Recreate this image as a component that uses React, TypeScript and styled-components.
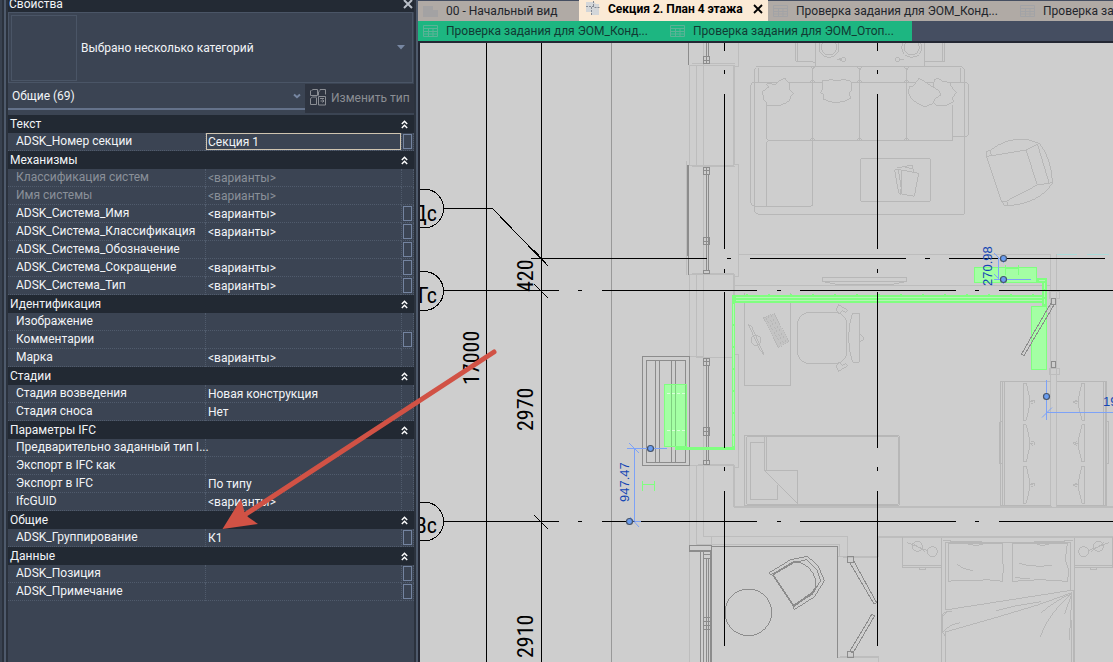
import React from 'react';
import styled, { createGlobalStyle } from 'styled-components';

const GlobalStyle = createGlobalStyle`
  *, *::before, *::after { box-sizing: border-box; }
  html, body { margin: 0; height: 100%; }
  body {
    font-family: Roboto, "Open Sans", sans-serif;
    font-size: 12px;
    color: #f2f4f7;
    background: #2b323d;
    overflow: hidden;
  }
  button, input, select { font: inherit; color: inherit; margin: 0; padding: 0; }
`;

/* ---------- window frame ---------- */

const Workspace = styled.main`
  position: relative;
  display: flex;
  height: 100vh;
`;

const DockEdge = styled.div`
  flex: 0 0 8px;
  background: #2b323d;
  border-left: 2px solid #394250;
  display: flex;
  padding-left: 2px;
`;

const Splitter = styled.div`
  flex: 0 0 2px;
  background: #4e5a6c;
`;

const Gutter = styled.div`
  flex: 0 0 2px;
  background: #2b323d;
`;

/* ---------- properties palette ---------- */

const Palette = styled.section`
  flex: 0 0 406px;
  display: flex;
  flex-direction: column;
  background: #3b4453;
`;

const PaletteTitle = styled.header`
  display: flex;
  align-items: flex-end;
  justify-content: space-between;
  height: 12px;
  background: #232a34;
  padding-right: 1px;
`;

const PaletteName = styled.h2`
  margin: 0;
  padding-left: 1px;
  font-size: 12px;
  font-weight: 400;
  line-height: 16px;
`;

const IconButton = styled.button`
  display: flex;
  align-items: center;
  justify-content: center;
  border: 0;
  background: none;
`;

const TypeSelector = styled.div`
  position: relative;
  display: flex;
  align-items: center;
  gap: 4px;
  height: 71px;
  padding: 1px 2px;
  border: 1px solid #4a5566;
  margin-right: 1px;
`;

const Preview = styled.div`
  width: 66px;
  height: 66px;
  border: 1px solid #4a5566;
`;

const Picker = styled.select`
  flex: 1;
  height: 100%;
  appearance: none;
  border: 0;
  outline: 0;
  background: none;
`;

const Caret = styled.svg`
  position: absolute;
  right: 7px;
  top: 50%;
  margin-top: -3px;
  pointer-events: none;
`;

const FilterRow = styled.div`
  display: flex;
  height: 32px;
  padding-top: 1px;
`;

const FilterBox = styled.div`
  position: relative;
  flex: 1;
  display: flex;
  height: 26px;
  padding-left: 4px;
  border-bottom: 2px solid #64728a;
  & > svg { right: 4px; }
`;

const EditType = styled.button`
  display: flex;
  align-items: center;
  gap: 4px;
  width: 109px;
  height: 29px;
  padding: 0 0 2px 5px;
  border: 0;
  background: #2e3440;
  color: #8b8e94;
  white-space: nowrap;
`;

const Grid = styled.table`
  width: 100%;
  table-layout: fixed;
  border-collapse: separate;
  border-spacing: 0;
`;

const GroupHead = styled.th`
  height: 18px;
  padding: 0 6px 0 2px;
  background: #222933;
  font-weight: 400;
  text-align: left;
`;

const GroupBar = styled.div`
  display: flex;
  justify-content: space-between;
  align-items: center;
  height: 18px;
  line-height: 18px;
`;

const Name = styled.th<{ $dim?: boolean }>`
  height: 18px;
  padding: 0 0 0 8px;
  border-bottom: 1px dotted #505b6c;
  font-weight: 400;
  line-height: 17px;
  text-align: left;
  white-space: nowrap;
  color: ${p => (p.$dim ? '#8a9099' : '#f2f4f7')};
`;

const Value = styled.td<{ $dim?: boolean }>`
  height: 18px;
  padding: 0;
  border-left: 1px dotted #505b6c;
  border-bottom: 1px dotted #505b6c;
  color: ${p => (p.$dim ? '#8a9099' : '#f2f4f7')};
`;

const Field = styled.input<{ $active?: boolean }>`
  display: block;
  width: 100%;
  height: 17px;
  padding: ${p => (p.$active ? '0 1px' : '0 2px')};
  border: ${p => (p.$active ? '1px solid #cfc4b0' : '0')};
  background: none;
  outline: 0;
`;

const Link = styled.td`
  height: 18px;
  padding: 0 1px;
  border-left: 1px dotted #505b6c;
  border-right: 1px dotted #505b6c;
  border-bottom: 1px dotted #505b6c;
`;

const LinkButton = styled.button`
  display: block;
  width: 9px;
  height: 15px;
  border: 1px solid #7484a0;
  background: none;
`;

type Row = { name: string; value?: string; dim?: boolean; link?: boolean; active?: boolean };
type Group = { title: string; rows: Row[] };

const V = '<варианты>';

const groups: Group[] = [
  { title: 'Текст', rows: [{ name: 'ADSK_Номер секции', value: 'Секция 1', link: true, active: true }] },
  {
    title: 'Механизмы',
    rows: [
      { name: 'Классификация систем', value: V, dim: true },
      { name: 'Имя системы', value: V, dim: true },
      { name: 'ADSK_Система_Имя', value: V, link: true },
      { name: 'ADSK_Система_Классификация', value: V, link: true },
      { name: 'ADSK_Система_Обозначение', link: true },
      { name: 'ADSK_Система_Сокращение', value: V, link: true },
      { name: 'ADSK_Система_Тип', value: V, link: true },
    ],
  },
  {
    title: 'Идентификация',
    rows: [{ name: 'Изображение' }, { name: 'Комментарии', link: true }, { name: 'Марка', value: V }],
  },
  {
    title: 'Стадии',
    rows: [{ name: 'Стадия возведения', value: 'Новая конструкция' }, { name: 'Стадия сноса', value: 'Нет' }],
  },
  {
    title: 'Параметры IFC',
    rows: [
      { name: 'Предварительно заданный тип I...' },
      { name: 'Экспорт в IFC как' },
      { name: 'Экспорт в IFC', value: 'По типу' },
      { name: 'IfcGUID', value: V },
    ],
  },
  { title: 'Общие', rows: [{ name: 'ADSK_Группирование', value: 'К1', link: true }] },
  { title: 'Данные', rows: [{ name: 'ADSK_Позиция', link: true }, { name: 'ADSK_Примечание', link: true }] },
];

const CollapseIcon = () => (
  <svg width="7" height="9" viewBox="0 0 7 9" fill="none" stroke="#fff" strokeWidth="1.4">
    <path d="M.8 4 3.5 1.2 6.2 4M.8 8 3.5 5.2 6.2 8" />
  </svg>
);

const EditTypeIcon = () => (
  <svg width="17" height="17" viewBox="0 0 17 17" fill="none" stroke="#8b8e94">
    <path d="M1.5 1.5 3 .5h4.500v6H.5v-5M9 1.500 10 .5h5.500v5M8.500 6.500V3L10 1.500M.5 15.500v-6l2-1.500h4.500M.5 15.500h6V9M8.500 7.500h7v8.500h-7zM10 9.500h4M10.500 12h3.500M12.500 10.500 14 12l-1.500 1.500" />
  </svg>
);

function PropertiesPalette() {
  return (
    <Palette aria-label="Свойства">
      <PaletteTitle>
        <PaletteName>Свойства</PaletteName>
        <IconButton aria-label="Закрыть">
          <svg width="10" height="12" viewBox="0 0 10 12" fill="none" stroke="#b9bfc8" strokeWidth="2">
            <path d="M1 0 9 8M9 0 1 8" />
          </svg>
        </IconButton>
      </PaletteTitle>
      <TypeSelector>
        <Preview />
        <Picker aria-label="Тип">
          <option>Выбрано несколько категорий</option>
        </Picker>
        <Caret width="8" height="5" viewBox="0 0 8 5">
          <path d="M0 0h8L4 4.500z" fill="#7787a2" />
        </Caret>
      </TypeSelector>
      <FilterRow>
        <FilterBox>
          <Picker aria-label="Фильтр">
            <option>Общие (69)</option>
          </Picker>
          <Caret width="8" height="6" viewBox="0 0 8 6">
            <path d="M1 1.500 4 4.200 7 1.500" fill="none" stroke="#7787a2" strokeWidth="2" />
          </Caret>
        </FilterBox>
        <EditType>
          <EditTypeIcon />
          Изменить тип
        </EditType>
      </FilterRow>
      <Grid>
        <colgroup>
          <col />
          <col width="196" />
          <col width="13" />
        </colgroup>
        {groups.map(g => (
          <tbody key={g.title}>
            <tr>
              <GroupHead colSpan={3}>
                <GroupBar>
                  {g.title}
                  <IconButton aria-label={'Свернуть: ' + g.title}>
                    <CollapseIcon />
                  </IconButton>
                </GroupBar>
              </GroupHead>
            </tr>
            {g.rows.map(r => (
              <tr key={r.name}>
                <Name scope="row" $dim={r.dim}>{r.name}</Name>
                <Value $dim={r.dim}>
                  <Field aria-label={r.name} defaultValue={r.value ?? ''} $active={r.active} readOnly={r.dim} />
                </Value>
                <Link>{r.link && <LinkButton aria-label={'Связать: ' + r.name} />}</Link>
              </tr>
            ))}
          </tbody>
        ))}
      </Grid>
    </Palette>
  );
}

/* ---------- document tabs ---------- */

const Documents = styled.section`
  flex: 1;
  min-width: 0;
  display: flex;
  flex-direction: column;
  background: #454e61;
`;

const TabRow = styled.nav<{ $first?: boolean }>`
  display: flex;
  align-items: flex-end;
  height: ${p => (p.$first ? '21px' : '20px')};
  overflow: hidden;
`;

const tones = {
  idle: { bg: '#b0aaa5', fg: '#22252b' },
  active: { bg: '#fbead5', fg: '#000000' },
  green: { bg: '#1db681', fg: '#113a33' },
};

const Tab = styled.div<{ $tone: keyof typeof tones; $width: number }>`
  flex: 0 0 ${p => p.$width}px;
  display: flex;
  align-items: center;
  height: ${p => (p.$tone === 'active' ? '21px' : '20px')};
  padding: ${p => (p.$tone === 'active' ? '0 5px 4px 6px' : '0 5px')};
  background: ${p => tones[p.$tone].bg};
  color: ${p => tones[p.$tone].fg};
  font-weight: ${p => (p.$tone === 'active' ? 700 : 400)};
  & > svg { flex: none; }
`;

const TabLabel = styled.button`
  flex: 1;
  padding: 0 0 0 8px;
  border: 0;
  background: none;
  line-height: 18px;
  text-align: left;
  white-space: nowrap;
`;

const SheetIcon = ({ color }: { color: string }) => (
  <svg width="15" height="12" viewBox="0 0 15 12" fill="none" stroke={color}>
    <path d="M.5.5h14v11H.5zM.5 3.500h14M.5 6.500h14M.5 9h14M5.500 3v9M10 3v9" />
  </svg>
);

const HomeIcon = () => (
  <svg width="15" height="12" viewBox="0 0 15 12">
    <path d="M0 1h10v4h5v7H0z" fill="#a3a2a3" />
  </svg>
);

const PlanIcon = () => (
  <svg width="15" height="15" viewBox="0 0 15 15">
    <path d="M2 1h7l2 2h3v11H6v-3H1V1z" fill="#d3d6d9" />
    <path d="M8.500 0v5M6.500 6v8M1 5.500h8M9.500 6.500h5" stroke="#858b94" strokeDasharray="2 1" fill="none" />
  </svg>
);

function DocumentTabs() {
  return (
    <>
      <TabRow $first>
        <Tab $tone="idle" $width={161}>
          <HomeIcon />
          <TabLabel>00 - Начальный вид</TabLabel>
        </Tab>
        <Tab $tone="active" $width={189}>
          <PlanIcon />
          <TabLabel>Секция 2. План 4 этажа</TabLabel>
          <IconButton aria-label="Закрыть вид">
            <svg width="10" height="10" viewBox="0 0 10 10" stroke="#000" strokeWidth="1.800">
              <path d="M1 1 9 9M9 1 1 9" />
            </svg>
          </IconButton>
        </Tab>
        <Tab $tone="idle" $width={247}>
          <SheetIcon color="#a2a3a6" />
          <TabLabel>Проверка задания для ЭОМ_Конд...</TabLabel>
        </Tab>
        <Tab $tone="idle" $width={247}>
          <SheetIcon color="#a2a3a6" />
          <TabLabel>Проверка за</TabLabel>
        </Tab>
      </TabRow>
      <TabRow>
        <Tab $tone="green" $width={247}>
          <SheetIcon color="#5ab396" />
          <TabLabel>Проверка задания для ЭОМ_Конд...</TabLabel>
        </Tab>
        <Tab $tone="green" $width={247}>
          <SheetIcon color="#5ab396" />
          <TabLabel>Проверка задания для ЭОМ_Отоп...</TabLabel>
        </Tab>
      </TabRow>
    </>
  );
}

/* ---------- floor plan ---------- */

const Viewport = styled.div`
  flex: 1;
  min-height: 0;
  border: solid #232733;
  border-width: 2px 0 0 2px;
  background: #cecece;
`;

const Drawing = styled.svg`
  display: block;
  width: 100%;
  height: 100%;
`;

const GridLabel = styled.text`
  font-family: "Roboto Condensed", "Open Sans Condensed", "Noto Sans Mono CJK JP", "Liberation Sans", sans-serif;
  font-size: 22px;
  fill: #000;
`;

const DimLabel = styled.text`
  font-family: "Liberation Sans", sans-serif;
  font-size: 13px;
  fill: #1346b4;
`;

const Turned = ({ x, y, children, as: T = GridLabel }: { x: number; y: number; children: string; as?: any }) => (
  <T transform={`translate(${x} ${y}) rotate(-90)`}>{children}</T>
);

const axesY = [724.5, 877.5];
const verticalDashes = [[43, 51], [70, 74], [94, 249], [269, 273], [292, 448], [467, 471], [491, 646]];
const longDashes = [[444, 559], [578, 582], [602, 757], [777, 781], [800, 956], [975, 979], [999, 1400]];
const upperDashes = [[531, 707], [727, 731], [750, 906], [925, 930], [949, 1105]];

const Axes = () => (
  <g stroke="#000" fill="none" shapeRendering="crispEdges">
    <path d="M486.5 43V2000M541.5 43V2000" />
    {axesY.map(x => (
      <path key={x} d={verticalDashes.map(([a, b]) => `M${x} ${a}V${b}`).join('')} />
    ))}
    {[290.5, 521.5].map(y => (
      <path key={y} d={longDashes.map(([a, b]) => `M${a} ${y}H${b}`).join('')} />
    ))}
    <path d={upperDashes.map(([a, b]) => `M${a} 258.5H${b}`).join('')} />
    <path d="M444 208.5H492.5L548 266M534 250 548 266M534 284 548 298M534 515 548 529" />
    <circle cx="424" cy="208.500" r="19.500" />
    <circle cx="424" cy="291" r="19.500" />
    <circle cx="424" cy="521.500" r="19.500" />
  </g>
);

const Walls = () => (
  <g fill="none" shapeRendering="crispEdges">
    <path stroke="#999" d="M611.5 43V2000" />
    <path
      stroke="#bdbdbd"
      d="M689.5 65V165M696.5 65V165M703.5 43V357M689.500 65.500H734M692 63.500H734.500M733.500 65V165M734.500 65V165
      M738.500 43V66.500H734M692 166.500H734.500M689 165.500H734M734 164.500H738.500V276.500H734M686.500 161V275
      M689.500 275V2000M696.500 275V357M733.500 275V295M734.500 275V295M689 274.500H734.500M692 273.500H734M738 254.500H1050M734 285.500H1050
      M696 357.500H734.500M690 356.500H703M698 464.500H734M734 354.500H738.500V467.500H734M703.500 357V536.500H847.500V557M696.500 465V544.500H839.500V557
      M689 465.500H734M733.500 465V507M734.500 465V507M734 506.500H1052M734 507.500H1052M1056 506.500H2000M1056 507.500H2000
      M711.500 537V545M878 536.500H2000M878 537.500H2000M878.500 537V557M837 556.500H878M843 557.500H878M837 657.500H878M840 656.500H878.500V662
      M1050.500 254V507M1056.500 254V507M1049 291.500H1059V298H1049zM1049 368.500H1059V374H1049zM1050 507.500H1057"
    />
    <path
      stroke="#8c8c8c"
      d="M688.500 43V65M687.500 165V256M688.500 165V275M706.500 43V56M708.500 43V56M703.500 56.500H709.500V63.500H703.500zM703.500 60.500H709.500M706.500 56V63
      M703.500 167.500H709.500V174.500H703.500zM703.500 170.500H709.500M706.500 167V270M708.500 174V270M703.500 237.500H709.500V244.500H703.500zM703.500 241.500H709.500M703.500 270.500H709.500V273.500H703.500z
      M703.500 358.500H709.500V365.500H703.500zM703.500 361.500H709.500M706.500 358V464M708.500 365V460M703.500 427.500H709.500V435.500H703.500zM703.500 431.500H709.500M703.500 460.500H709.500V464.500H703.500z
      M642.500 356.500H689.500V465.500H642.500zM646.500 360.500H685.500V462.500H646.500zM655.500 360V462M659.500 360V462M671.500 360V462M675.500 360V462
      M689.500 545.500H711.500V551.500H689.500zM689.500 550.500H711M711 546.500H837.500V658M700.500 551V2000M703.500 551V2000M706.500 558V2000M708.500 558V2000M710.500 551V2000M711.500 551V2000
      M703.500 554.500H711M703.500 558.500H711M703.500 617.500H711M703.500 621.500H711M703.500 625.500H711M703.500 629.500H711
      M847.500 556.500H853.500V562.500H847.500zM847.500 651.500H853.500V657.500H847.500z"
    />
    <path stroke="#8c8c8c" d="M850 563 874 604 876.500 602.500 854 561.500M872 614 850 651 853 653 874.500 616z" />
  </g>
);

const pillow = 'M217 155 236 141 229 133 237 130 256 134 270 121 285 115 291 124 299 128 300 149 310 160 301 171 299 181Q270 205 230 195L230 187 222 181z';

/* Loose furniture is drawn in thirds of a pixel. */
const Furniture = () => (
  <g fill="none" stroke="#b7b7b7" strokeWidth="3" shapeRendering="crispEdges">
    <g transform="translate(690 40) scale(.33333)">
      <path d="M317 0V64H360L377 68M323 0V64M377 0V79M703 0V79M377 79H703M703 65H763V0M757 0V65" />
      <circle cx="417" cy="22" r="30" />
      <circle cx="417" cy="22" r="23" />
      <circle cx="665" cy="22" r="30" />
      <circle cx="665" cy="22" r="23" />
      <circle cx="460" cy="58" r="7" />
      <circle cx="622" cy="58" r="7" />
      <path d="M440 58H453M629 58H643M453 55 444 58 453 61" />
      <path d="M205 79H810Q823 80 823 93V523H205Q194 522 194 512V95Q194 80 205 79zM206 127V85M812 127V85" />
      <path d="M194 127H788M182 488V138Q182 127 194 127M182 488Q183 499 194 499H362Q368 499 368 490V308Q367 301 360 301H236Q230 302 230 310V499M230 150V295Q231 301 238 301H788M368 85V301M509 85V301M650 85V301M788 195V301M788 289H828Q836 288 836 280V138Q835 127 824 127H788" />
      <path d="M360 80Q368 82 368 90Q369 82 376 80M501 80 509 90 517 80M642 80 650 90 658 80M360 127 368 120 376 127M501 127 509 120 517 127M642 127 650 120 658 127M360 301 368 292 376 301M501 301 509 292 517 301M642 301 650 292 658 301" />
      <g fill="#cecece">
        <path d={pillow} />
        <path d="M398 120 408 123 425 117 432 122 445 123 455 119 478 121 485 127V149L477 160 483 174Q440 200 400 177L402 165 392 158 398 145z" />
        <path d="M734 118 746 115 756 124 780 127 783 138 799 158 788 172 790 186 770 196 740 196 720 180z" />
        <path d="M655 160 658 141 670 138 687 115 705 125 722 137 748 152 752 165 735 176 730 190 705 200Q670 190 655 160z" />
      </g>
      <rect x="511" y="355" width="211" height="130" rx="9" />
      <path d="M614 390 625 388 636 460 626 460zM625 387 636 391 632 465M636 390 686 400 673 469 626 460M622 384 650 378 668 376 670 396M640 380 665 386" />
    </g>
    <g transform="translate(760 0) scale(.33333)">
      <path d="M678 454 690 452Q740 412 800 418L838 430Q872 470 878 548Q840 612 735 618L725 605 680 470zM690 468 798 450 832 555 740 603M678 470 694 467 690 452M798 450 835 432M832 555 876 548M833 435 867 548M725 605 740 603 743 616" />
    </g>
    <g transform="translate(720 230) scale(.33333)">
      <path d="M307 143H560V154H307zM310 155 355 164H513L557 155M73 190V466H212V190" />
      <rect x="232" y="247" width="149" height="154" rx="36" />
      <path d="M397 250H418V397H398Q374 325 397 250zM418 312 430 320V329L418 336M349 240 355 224 382 240 377 248 367 241 358 252zM349 408 355 424 382 408 377 400 367 407 358 396z" />
      <path d="M130 264 163 250 206 335 175 352z" fill="#c4c4c4" strokeDasharray="5 2" />
      <path d="M137 263 185 346M145 259 192 342M153 256 200 338" strokeDasharray="7 5" />
      <path d="M85 283 95 290 133 376 120 360z" />
      <circle cx="108" cy="331" r="15" />
    </g>
    <g transform="translate(690 380) scale(.33333)">
      <path d="M163 167H628V376H163zM170 171H625V373H170zM181 187H223M181 187V358H263V315M224 171V271L323 371V271H224M230 171V271" />
      <path d="M932 4H1082M1100 4H1250V377H1100M1082 377H932V4M937 4V377M943 4V377M1241 4V377M1247 4V377M937 125H929V251H937M1250 125H1256V251H1250" />
      {[66, 190, 315].map(y => (
        <g key={y} transform={`translate(0 ${y})`}>
          <path d="M1000-56H1009L1018-15V15L1009 55H1000zM1018 0H1028M1024-5H1033V4M1022 3 1030 7" />
          <path d="M1184-56H1176L1166-15V15L1176 55H1184zM1166 0H1156M1160-5 1148 0 1160 6" />
        </g>
      ))}
    </g>
    <g transform="translate(680 510) scale(.33333)" stroke="#8c8c8c">
      <circle cx="205" cy="307" r="70" />
      <path d="M268 188 332 149 382 139 415 168 433 212 404 260 343 299 339 290M268 188 272 194 336 160 380 149 410 178 422 212 398 252 339 290" />
      <path d="M279 195 341 288" strokeWidth="5" />
      <path d="M279 193 340 157H362M341 288 398 248 410 228" strokeWidth="6" />
      <path d="M362 158Q410 180 408 228" />
    </g>
    <g transform="translate(880 510) scale(.33333)">
      <path d="M67 80V172H184V83M67 166H184M118 172V178H137V172M584 83V172H699V80M584 166H699M631 172V178H650V172" />
      <circle cx="112" cy="109" r="15" />
      <circle cx="157" cy="125" r="15" />
      <circle cx="655" cy="109" r="15" />
      <circle cx="611" cy="125" r="15" />
      <path d="M82 98 140 121M686 98 627 121M95 98 135 125M672 98 632 125" />
      <path d="M184 83V456M584 83V456M190 91H212V95H306M578 91H555V95H462M196 97H572M196 97V300M572 97V240M196 300 580 240M196 366 350 322 470 286 576 248M348 302 410 287 484 275" />
      <path d="M205 100H368L366 150 370 165 368 214 320 209 285 212 240 210 205 214zM397 100H562L556 150 566 180 563 214 530 212 480 209 430 212 397 214zM265 103 290 107 308 102M470 103 488 107 508 102M232 163Q250 180 280 181M417 160Q460 173 516 166M405 203 450 206" />
      <path d="M576 250Q505 310 481 380M576 250Q520 275 484 308M576 250 554 311M576 250 568 389M580 240V456M574 330V456M215 304Q196 302 187 314V365L196 380V456M190 365Q205 345 240 338M190 318 200 306M196 366V456" />
    </g>
  </g>
);

const pipeJoints = Array.from({ length: 14 }, (_, i) => 746 + i * 22);

const Pipes = () => (
  <g stroke="#80ff80" fill="none" shapeRendering="crispEdges">
    <g fill="#a4ffa4">
      <rect x="664.500" y="384.500" width="22" height="62" rx="1" />
      <rect x="974.500" y="267.500" width="62" height="15" />
      <rect x="1031.500" y="306.500" width="15" height="63" />
    </g>
    <path stroke="#7fcf80" d="M671.500 385V446M675.500 385V446M685.500 385V446" />
    <path stroke="#d9ffd9" strokeDasharray="3 2" d="M667 393.500H686M667 430.500H686" />
    <rect x="733" y="295" width="314" height="8" fill="#80ff80" stroke="none" />
    <path stroke="#b5f5b5" d="M736 297.500H1042M736 300.500H1042" />
    <path d={pipeJoints.map(x => `M${x} 294.500h2`).join('')} />
    <path strokeWidth="3" d="M733.500 295V448M735 448.500H675" />
    <path stroke="#b5f5b5" d="M733.500 304V446" strokeDasharray="20 2" />
    <path strokeWidth="5" d="M1037 280.500H1044.500V306" />
    <path stroke="#b5f5b5" strokeDasharray="6 2" d="M1039 280.500H1044.500V304" />
    <path d="M1005 268.500H1019M1005.500 265V275M1018.500 265V275M642 484.500H655M642.500 481V491M654.500 481V491" />
    <path stroke="#a9dcda" d="M1057 254.500H1077M1087 254.500H1109" />
  </g>
);

const Door = () => (
  <g stroke="#8c8c8c" fill="none" shapeRendering="crispEdges">
    <path d="M1051.500 298.500H1055.500V304.500H1051.500zM1051.500 361.500H1055.500V367.500H1051.500zM1051 303 1021.500 354 1024 355.500 1054 305" />
  </g>
);

const handles = [[650.5, 448.5], [629.5, 521.5], [1003.5, 258.5], [1003.5, 279.5], [1046.5, 396.5]];

const Dimensions = () => (
  <>
    <g stroke="#7da2f7" fill="none">
      <path d="M634.500 448V521M627 448.500H667M629 443 639 453M634.500 521.500H641M630 517 639 527" />
      <path d="M998.500 258V280M994 279.500H1031M994 253 1004 263M994 274 1004 284" />
      <path d="M1046.500 380V420M1046.500 412.500H2000M1042 417.500 1052 407.500" />
    </g>
    {handles.map(([x, y]) => (
      <circle key={`${x}-${y}`} cx={x} cy={y} r="3" fill="#6a9df0" stroke="#46536a" strokeWidth="1.200" />
    ))}
    <Turned x={629} y={502} as={DimLabel}>947.47</Turned>
    <Turned x={992} y={286} as={DimLabel}>270.98</Turned>
    <DimLabel x="1103" y="406">19</DimLabel>
  </>
);

const FloorPlan = () => (
  <Drawing role="img" aria-label="План 4 этажа">
    <g transform="translate(-420 -43)">
      <Walls />
      <Furniture />
      <Pipes />
      <Door />
      <Axes />
      <GridLabel x="437" y="221" textAnchor="end">Дс</GridLabel>
      <GridLabel x="437" y="303" textAnchor="end">Гс</GridLabel>
      <GridLabel x="437" y="533" textAnchor="end">Вс</GridLabel>
      <Turned x={533} y={292}>420</Turned>
      <Turned x={479} y={385}>17000</Turned>
      <Turned x={533} y={431}>2970</Turned>
      <Turned x={533} y={658}>2910</Turned>
      <Dimensions />
    </g>
  </Drawing>
);

/* Red pointer that runs over both the palette and the plan. */
const Pointer = styled.svg`
  position: absolute;
  left: 222px;
  top: 348px;
  pointer-events: none;
`;

export default function App() {
  return (
    <>
      <GlobalStyle />
      <Workspace>
        <DockEdge>
          <Splitter />
        </DockEdge>
        <PropertiesPalette />
        <Gutter />
        <Splitter />
        <Documents>
          <DocumentTabs />
          <Viewport>
            <FloorPlan />
          </Viewport>
        </Documents>
        <Pointer width="278" height="184" viewBox="222 348 278 184">
          <path d="M246 514 494 352" stroke="#d15245" strokeWidth="5" strokeLinecap="round" />
          <path d="M222.500 529 241 499 244.500 512 248 517 258 524z" fill="#d15245" />
        </Pointer>
      </Workspace>
    </>
  );
}
